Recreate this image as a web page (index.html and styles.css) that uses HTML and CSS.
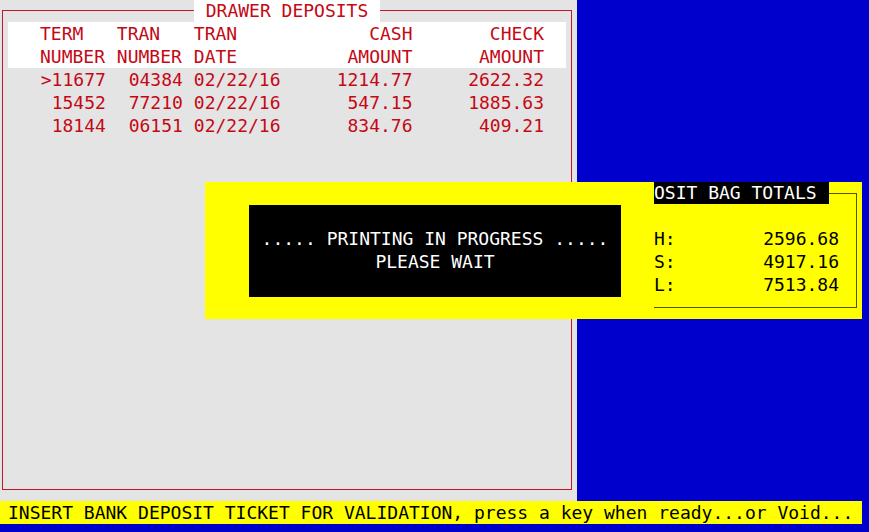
FILE: index.html
```html
<!DOCTYPE html>
<html lang="en">
<head>
<meta charset="utf-8">
<title>Drawer Deposits</title>
<link rel="stylesheet" href="styles.css">
</head>
<body>
<div class="screen">
  <main class="workspace">
    <section class="drawer">
      <div class="drawer-frame">
        <h1 class="drawer-title">DRAWER DEPOSITS</h1>
        <table class="deposits">
          <colgroup>
            <col class="col-term"><col class="col-tran"><col class="col-date"><col class="col-cash"><col class="col-check">
          </colgroup>
          <thead>
            <tr><th>TERM<br>NUMBER</th><th>TRAN<br>NUMBER</th><th>TRAN<br>DATE</th><th class="amount">CASH<br>AMOUNT</th><th class="amount">CHECK<br>AMOUNT</th></tr>
          </thead>
          <tbody>
            <tr><td class="num">&gt;11677</td><td class="num">04384</td><td>02/22/16</td><td class="amount">1214.77</td><td class="amount">2622.32</td></tr>
            <tr><td class="num">15452</td><td class="num">77210</td><td>02/22/16</td><td class="amount">547.15</td><td class="amount">1885.63</td></tr>
            <tr><td class="num">18144</td><td class="num">06151</td><td>02/22/16</td><td class="amount">834.76</td><td class="amount">409.21</td></tr>
          </tbody>
        </table>
      </div>
    </section>
    <div class="popup">
      <div class="notice" role="status">
        <p>..... PRINTING IN PROGRESS .....</p>
        <p>PLEASE WAIT</p>
      </div>
      <section class="totals">
        <h2 class="totals-title">OSIT BAG TOTALS</h2>
        <dl class="totals-list">
          <div class="total"><dt>H:</dt><dd>2596.68</dd></div>
          <div class="total"><dt>S:</dt><dd>4917.16</dd></div>
          <div class="total"><dt>L:</dt><dd>7513.84</dd></div>
        </dl>
      </section>
    </div>
  </main>
  <footer class="prompt">INSERT BANK DEPOSIT TICKET FOR VALIDATION, press a key when ready...or Void...</footer>
</div>
</body>
</html>
```
FILE: styles.css
```css
* {
  box-sizing: border-box;
}

body,
h1,
h2,
p,
dl,
dd {
  margin: 0;
}

body {
  background: #0000cd;
  font: 18px/23px "DejaVu Sans Mono", "Liberation Mono", monospace;
}

h1,
h2,
th {
  font-size: inherit;
  font-weight: normal;
}

h1,
h2 {
  line-height: 22px;
}

.screen {
  display: flex;
  flex-direction: column;
  min-height: 100vh;
  padding-bottom: 8px;
}

.workspace {
  position: relative;
  display: flex;
  flex: 1;
}

.drawer {
  display: flex;
  width: 66.4%;
  padding: 10px 5px 11px 2px;
  background: #e4e4e4;
  color: #c40814;
}

.drawer-frame {
  flex: 1;
  padding: 0 5px;
  border: 1px solid #c01828;
}

.drawer-title {
  width: fit-content;
  margin: -11px auto 0;
  padding: 0 12px;
  background: #fff;
}

.deposits {
  width: 100%;
  table-layout: fixed;
  border-collapse: collapse;
  line-height: 23px;
  white-space: nowrap;
}

.deposits thead {
  background: #fff;
}

.deposits th,
.deposits td {
  padding: 0;
  text-align: left;
}

.deposits th:first-child {
  padding-left: 32px;
}

.deposits .num {
  padding-right: 11px;
  text-align: right;
}

.deposits .amount {
  text-align: right;
}

.deposits .amount:last-child {
  padding-right: 22px;
}

.col-term {
  width: 19.5%;
}

.col-tran {
  width: 13.8%;
}

.col-date {
  width: 17.2%;
}

.col-cash {
  width: 22%;
}

.col-check {
  width: 27.5%;
}

.popup {
  position: absolute;
  top: 182px;
  right: 7px;
  left: 205px;
  display: flex;
  background: #ff0;
  white-space: nowrap;
}

.notice {
  flex: 1;
  margin: 23px 33px 22px 44px;
  padding: 22px 0;
  background: #000;
  color: #fff;
  text-align: center;
}

.totals {
  width: 208px;
  padding: 11px 5px 11px 0;
}

.totals::before {
  content: "";
  display: block;
  border-top: 1px solid #555500;
}

.totals-title {
  width: fit-content;
  margin-top: -12px;
  padding-right: 12px;
  background: #000;
  color: #fff;
}

.totals-list {
  margin-top: -10px;
  padding: 33px 17px 11px 0;
  border: solid #555500;
  border-width: 0 1px 1px 0;
}

.total {
  display: flex;
  justify-content: space-between;
}

.prompt {
  margin-right: 7px;
  padding-left: 8px;
  background: #ff0;
  color: #000;
}
```
